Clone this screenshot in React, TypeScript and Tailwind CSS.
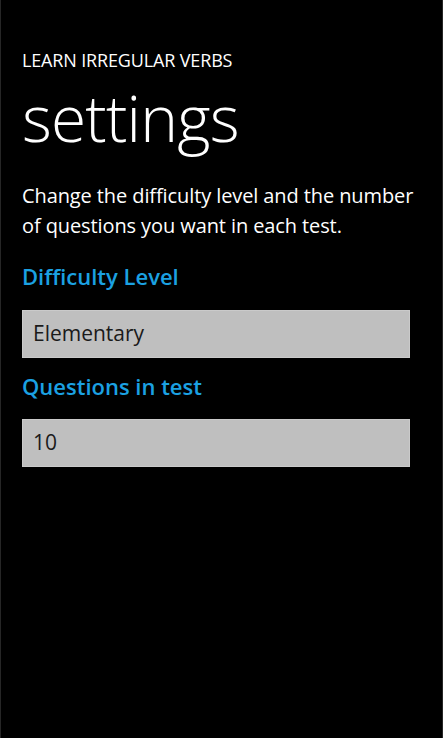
export default function App() {
  return (
    <div
      className="w-full h-[738px] bg-black border-x border-[#262626] text-white pl-[21px] pr-[20px]"
      style={{ fontFamily: '"Open Sans", "Noto Sans", sans-serif' }}
    >
      {/* Header */}
      <div className="pt-[48px] text-[18px] leading-[24px] tracking-[-0.15px]">LEARN IRREGULAR VERBS</div>
      <h1 className="mt-[14px] text-[64px] leading-[64px] font-light tracking-[-0.8px]">settings</h1>

      {/* Description */}
      <p className="mt-[31px] text-[20px] leading-[30px] tracking-[-0.1px]">
        Change the difficulty level and the number of questions you want in each test.
      </p>

      {/* Difficulty */}
      <div className="mt-[20px] text-[22px] leading-[30px] font-semibold text-[#1ba1e2]">
        Difficulty Level
      </div>
      <div className="mt-[19px] mr-[12px] h-[48px] bg-[#bfbfbf] border border-[#cacaca] flex items-center px-[10px] text-[21px] text-[#1a1a1a]">
        Elementary
      </div>

      {/* Questions */}
      <div className="mt-[13px] text-[22px] leading-[30px] font-semibold text-[#1ba1e2]">
        Questions in test
      </div>
      <div className="mt-[18px] mr-[12px] h-[48px] bg-[#bfbfbf] border border-[#cacaca] flex items-center px-[10px] text-[21px] text-[#1a1a1a]">
        10
      </div>
    </div>
  );
}
